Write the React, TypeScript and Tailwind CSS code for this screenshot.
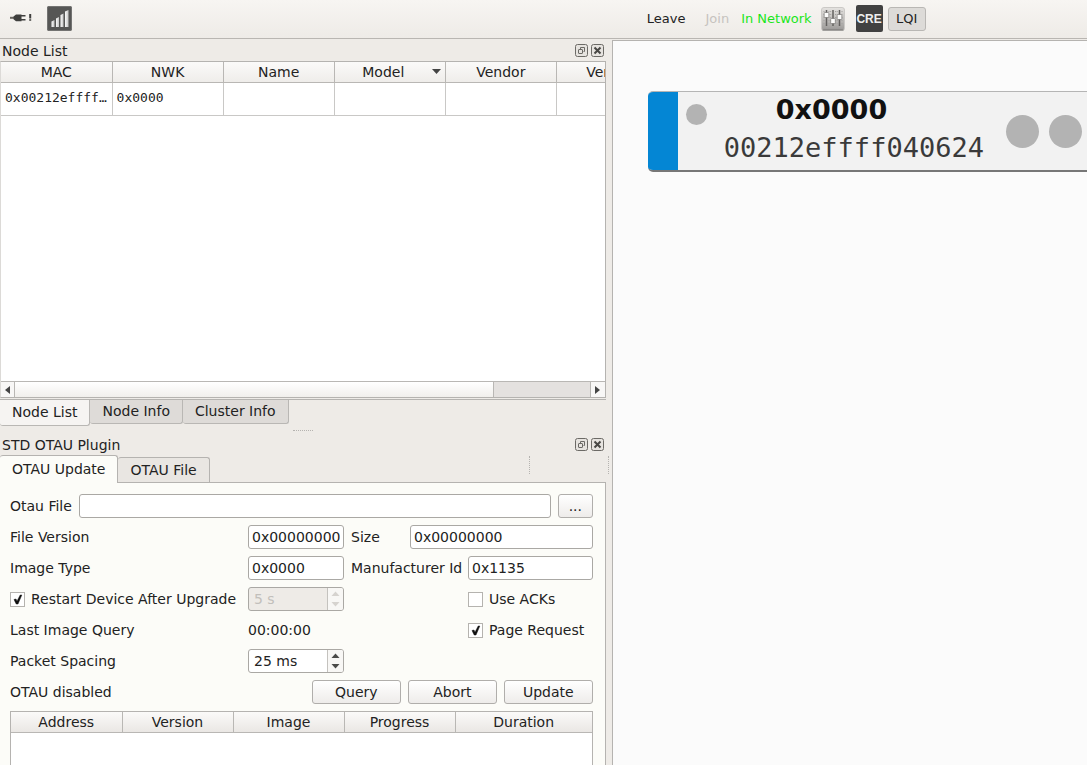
import { useState } from "react";
import clsx from "clsx";

const nodeColumns = ["MAC", "NWK", "Name", "Model", "Vendor", "Version"];
const otauColumns = ["Address", "Version", "Image", "Progress", "Duration"];

const field =
  "h-6 min-w-0 rounded-[3px] border border-[#aaa8a4] bg-white px-[3px] text-[#222]";
const pushButton =
  "h-6 rounded-[3px] border border-[#b0aeab] bg-linear-to-b from-white to-[#eeecea]";

function PlugIcon() {
  return (
    <svg width="24" height="12" viewBox="0 0 24 12" fill="#3f3f3d">
      <path d="M0 4.8h5v2H0z" fill="#66645f" />
      <path d="M3.5 4.4 6 2.6h5.5v6.6H6L3.5 7.2z" />
      <path d="M11 3h4.5v1.6H11zM11 7h4.5v1.6H11z" />
      <path d="M19.2 2h2v4.6h-2zM19.2 7.2h2v1.6h-2z" />
    </svg>
  );
}

function SignalIcon() {
  return (
    <svg width="25" height="25" viewBox="0 0 25 25">
      <defs>
        <linearGradient id="bar" x1="0" y1="0" x2="1" y2="0">
          <stop offset="0" stopColor="#fafafa" />
          <stop offset="1" stopColor="#c6c6c5" />
        </linearGradient>
      </defs>
      <rect width="25" height="25" rx="2" fill="#565655" />
      <rect x="0.5" y="0.5" width="24" height="24" rx="1.5" fill="none" stroke="#737372" />
      <g fill="url(#bar)">
        <path d="M4.5 15.5 7.5 14v7h-3z" />
        <path d="M9 12.5 12 11v10H9z" />
        <path d="M13.5 9l3-1.5V21h-3z" />
        <path d="M18 5.5 21.5 4v17H18z" />
      </g>
    </svg>
  );
}

function SlidersIcon() {
  return (
    <svg width="24" height="24" viewBox="0 0 24 24">
      <defs>
        <linearGradient id="mixer" x1="0" y1="0" x2="0" y2="1">
          <stop offset="0" stopColor="#e6e4e1" />
          <stop offset="1" stopColor="#9a9896" />
        </linearGradient>
      </defs>
      <rect x="0.5" y="0.5" width="23" height="23" rx="2.5" fill="url(#mixer)" stroke="#cbc9c6" />
      <path d="M1.5 23h21" stroke="#777573" />
      <path d="M5.5 3v16M12 3v16M18.5 3v16" stroke="#63615f" strokeWidth="1.5" />
      <path
        d="M3 4v14M8 4v14M9.7 4v14M14.5 4v14M16.2 4v14M21 4v14"
        stroke="#a3a19f"
        strokeDasharray="1 2"
      />
      <g fill="#fcfcfb" stroke="#6b6967" strokeWidth="0.6">
        <rect x="3.2" y="5.5" width="4.6" height="5" rx="0.7" />
        <rect x="9.7" y="11.5" width="4.6" height="5" rx="0.7" />
        <rect x="16.2" y="7.5" width="4.6" height="5" rx="0.7" />
      </g>
    </svg>
  );
}

function FloatIcon() {
  return (
    <svg width="13" height="13" viewBox="0 0 13 13" fill="none" stroke="#6c6a66">
      <rect x="0.5" y="0.5" width="12" height="12" rx="2" fill="#e6e3df" />
      <path d="M5.5 5V3.5h4v4H8.5" />
      <rect x="3.5" y="5.5" width="4" height="4" rx="0.5" />
    </svg>
  );
}

function CloseIcon() {
  return (
    <svg width="13" height="13" viewBox="0 0 13 13" fill="none" stroke="#6c6a66">
      <rect x="0.5" y="0.5" width="12" height="12" rx="2" fill="#e6e3df" />
      <path d="m3.5 3.5 6 6m0-6-6 6" stroke="#484744" strokeWidth="2" />
    </svg>
  );
}

function DockTitle({ title }: { title: string }) {
  return (
    <div className="flex h-[21px] shrink-0 items-center gap-[3px] pr-[2px] pl-[2px]">
      <h2 className="mr-auto">{title}</h2>
      <button aria-label={`Float ${title}`}>
        <FloatIcon />
      </button>
      <button aria-label={`Close ${title}`}>
        <CloseIcon />
      </button>
    </div>
  );
}

function CheckBox({ label, checked }: { label: string; checked?: boolean }) {
  return (
    <label className="flex items-center gap-[6px] whitespace-nowrap">
      <span className="grid">
        <input
          type="checkbox"
          defaultChecked={checked}
          className="peer col-start-1 row-start-1 size-[15px] appearance-none border border-[#b5b3af] bg-white"
        />
        <svg
          viewBox="0 0 15 15"
          className="pointer-events-none invisible col-start-1 row-start-1 size-[15px] peer-checked:visible"
        >
          <path d="M4 7.5 6 7l1 2.2L10.2 3h1.6L8 12H6.2z" fill="#111" stroke="#111" strokeWidth="0.5" />
        </svg>
      </span>
      {label}
    </label>
  );
}

type SpinBoxProps = { id: string; label: string; value: string; disabled?: boolean };

function SpinBox({ id, label, value, disabled }: SpinBoxProps) {
  const arrow = disabled ? "#d6d3cf" : "#4a4a48";
  return (
    <div
      className={clsx(
        "flex h-6 overflow-hidden rounded-[3px] border border-[#aaa8a4]",
        disabled ? "bg-[#eeebe7] text-[#c2bfbb]" : "bg-white text-[#222]"
      )}
    >
      <input
        id={id}
        aria-label={label}
        defaultValue={value}
        disabled={disabled}
        className="w-0 min-w-0 flex-1 px-[5px]"
      />
      <div className="flex w-4 flex-col border-l border-[#c4c2be] bg-[#f8f7f5]">
        <button type="button" aria-label={`Increase ${label}`} disabled={disabled} className="flex flex-1 items-center justify-center">
          <svg width="9" height="5" viewBox="0 0 9 5">
            <path d="M4.5 0.5 8.5 5h-8z" fill={arrow} />
          </svg>
        </button>
        <button type="button" aria-label={`Decrease ${label}`} disabled={disabled} className="flex flex-1 items-center justify-center">
          <svg width="9" height="5" viewBox="0 0 9 5">
            <path d="M4.5 4.5 8.5 0h-8z" fill={arrow} />
          </svg>
        </button>
      </div>
    </div>
  );
}

function Toolbar() {
  return (
    <header className="grid h-[39px] shrink-0 grid-cols-[51fr_6px_40fr] border-b border-[#b9b6b2] bg-linear-to-b from-[#f7f5f2] to-[#eeebe7] text-[13px]">
      <div className="flex items-center gap-[13px] pb-[2px] pl-[10px]">
        <button aria-label="Connect">
          <PlugIcon />
        </button>
        <button aria-label="Signal">
          <SignalIcon />
        </button>
      </div>
      <div />
      <div className="flex items-center pb-px pl-[35px] whitespace-nowrap">
        <button>Leave</button>
        <button disabled className="ml-5 text-[#c6c3bf]">
          Join
        </button>
        <span className="ml-3 text-[#1be61b]">In Network</span>
        <button aria-label="Settings" className="ml-[9px]">
          <SlidersIcon />
        </button>
        <button className="ml-[11px] flex h-[27px] w-[27px] items-center justify-center rounded-[2px] bg-[#414141] font-['Liberation_Sans',sans-serif] text-[12px] font-bold text-[#eee]">
          CRE
        </button>
        <button className="ml-[5px] h-6 w-[38px] rounded-[3px] border border-[#b9b7b4] bg-[#dddbd8]">
          LQI
        </button>
      </div>
    </header>
  );
}

function NodeTable() {
  return (
    <div className="flex min-h-0 flex-1 flex-col border border-l-[#dcdad7] border-[#b5b3b0] bg-white">
      <div className="min-h-0 flex-1 overflow-hidden">
        <table className="w-[667px] table-fixed border-collapse">
          <thead>
            <tr className="h-5 bg-linear-to-b from-[#fbfaf9] to-[#efedea]">
              {nodeColumns.map((name) => (
                <th key={name} className="border-r border-b border-[#b9b7b4] p-0 font-normal">
                  {name === "Model" ? (
                    <span className="flex items-center pr-1">
                      <span className="flex-1">{name}</span>
                      <svg width="9" height="5" viewBox="0 0 9 5">
                        <path d="M0 0h9L4.5 5z" fill="#444" />
                      </svg>
                    </span>
                  ) : (
                    name
                  )}
                </th>
              ))}
            </tr>
          </thead>
          <tbody>
            <tr className="h-[33px] font-['DejaVu_Sans_Mono',monospace] text-[13px]">
              <td className="truncate border-r border-b border-[#c9c8c6] px-1 pb-[2px]">0x00212effff040624</td>
              <td className="border-r border-b border-[#c9c8c6] px-1 pb-[2px]">0x0000</td>
              <td className="border-r border-b border-[#c9c8c6]" />
              <td className="border-r border-b border-[#c9c8c6]" />
              <td className="border-r border-b border-[#c9c8c6]" />
              <td className="border-r border-b border-[#c9c8c6]" />
            </tr>
          </tbody>
        </table>
      </div>
      <div className="flex h-4 shrink-0 border-t border-[#b9b7b4] bg-[#e4e1df]">
        <button aria-label="Scroll left" className="flex w-[14px] items-center justify-center border-r border-[#b9b7b4] bg-[#f8f7f6]">
          <svg width="5" height="8" viewBox="0 0 5 8">
            <path d="M5 0v8L0 4z" fill="#444" />
          </svg>
        </button>
        <div className="flex-1">
          <div className="h-full w-5/6 border-r border-[#b9b7b4] bg-linear-to-b from-white to-[#f1efec]" />
        </div>
        <button aria-label="Scroll right" className="flex w-[15px] items-center justify-center border-l border-[#b9b7b4] bg-[#f8f7f6]">
          <svg width="5" height="8" viewBox="0 0 5 8">
            <path d="M0 0v8l5-4z" fill="#444" />
          </svg>
        </button>
      </div>
    </div>
  );
}

function NodeDock() {
  const tabs = ["Node List", "Node Info", "Cluster Info"];
  const [active, setActive] = useState("Node List");

  return (
    <section className="flex min-h-0 flex-1 flex-col">
      <DockTitle title="Node List" />
      <NodeTable />
      <div className="mt-px flex h-[27px] shrink-0 items-start border-t border-[#b5b3b0]">
        {tabs.map((tab) => (
          <button
            key={tab}
            onClick={() => setActive(tab)}
            className={clsx(
              "rounded-b-[3px] border-r border-b border-[#b9b7b4] pb-[2px] pl-3",
              tab === active ? "h-[26px] bg-[#f6f4f2] pr-3" : "h-6 bg-[#dedbd8] pr-3"
            )}
          >
            {tab}
          </button>
        ))}
      </div>
    </section>
  );
}

function OtauForm() {
  return (
    <form className="flex flex-col gap-[7px] whitespace-nowrap">
      <div className="flex items-center gap-[7px]">
        <label htmlFor="otau-file">Otau File</label>
        <input id="otau-file" className={clsx(field, "flex-1")} />
        <button type="button" aria-label="Browse" className={clsx(pushButton, "w-[35px]")}>
          ...
        </button>
      </div>
      <div className="grid grid-cols-[231px_96px_minmax(0,1fr)] items-center gap-[7px]">
        <label htmlFor="file-version">File Version</label>
        <input id="file-version" defaultValue="0x00000000" className={field} />
        <div className="flex items-center gap-[7px]">
          <label htmlFor="size" className="w-[52px] shrink-0">
            Size
          </label>
          <input id="size" defaultValue="0x00000000" className={clsx(field, "flex-1")} />
        </div>

        <label htmlFor="image-type">Image Type</label>
        <input id="image-type" defaultValue="0x0000" className={field} />
        <div className="flex items-center gap-[7px]">
          <label htmlFor="manufacturer" className="w-[110px] shrink-0">
            Manufacturer Id
          </label>
          <input id="manufacturer" defaultValue="0x1135" className={clsx(field, "flex-1")} />
        </div>

        <CheckBox label="Restart Device After Upgrade" checked />
        <SpinBox id="restart-delay" label="Restart delay" value="5 s" disabled />
        <div className="pl-[117px]">
          <CheckBox label="Use ACKs" />
        </div>

        <span className="h-6 leading-6">Last Image Query</span>
        <span>00:00:00</span>
        <div className="pl-[117px]">
          <CheckBox label="Page Request" checked />
        </div>

        <label htmlFor="packet-spacing">Packet Spacing</label>
        <SpinBox id="packet-spacing" label="Packet Spacing" value="25 ms" />
      </div>
      <div className="flex items-center gap-[7px]">
        <span className="mr-auto">OTAU disabled</span>
        {["Query", "Abort", "Update"].map((name) => (
          <button key={name} type="button" className={clsx(pushButton, "w-[89px]")}>
            {name}
          </button>
        ))}
      </div>
    </form>
  );
}

function OtauDock() {
  const tabs = ["OTAU Update", "OTAU File"];
  const [active, setActive] = useState("OTAU Update");

  return (
    <section className="flex shrink-0 flex-col">
      <DockTitle title="STD OTAU Plugin" />
      <div className="flex h-[27px] items-end">
        {tabs.map((tab) => (
          <button
            key={tab}
            onClick={() => setActive(tab)}
            className={clsx(
              "rounded-t-[3px] border-t border-r border-[#b5b3b0] px-3",
              tab === active ? "z-10 -mb-px h-7 bg-[#fcfcf8] pb-[2px]" : "h-[25px] bg-[#e9e6e2]"
            )}
          >
            {tab}
          </button>
        ))}
        <div className="mr-[76px] mb-2 ml-auto h-[18px] border-l border-dotted border-[#b5b3b0]" />
      </div>
      <div className="border-t border-r border-[#b5b3b0] bg-[#fcfcf8] pt-[11px] pr-3 pl-[10px]">
        <OtauForm />
        <div className="mt-[7px] h-[54px] border border-b-0 border-[#b5b3b0] bg-white">
          <table className="w-full table-fixed border-collapse">
            <thead>
              <tr className="h-5 bg-linear-to-b from-[#fbfaf9] to-[#eae7e4]">
                {otauColumns.map((name) => (
                  <th
                    key={name}
                    className="w-[111px] border-r border-b border-[#b9b7b4] p-0 font-normal last:w-auto last:border-r-0"
                  >
                    {name}
                  </th>
                ))}
              </tr>
            </thead>
          </table>
        </div>
      </div>
    </section>
  );
}

function NodeCard() {
  return (
    <div className="mt-[50px] ml-[35px] flex h-[81px] w-[480px] overflow-hidden rounded-[5px] border-t border-b-2 border-t-[#b5b5b5] border-b-[#777] bg-[#f2f2f2]">
      <div className="w-[30px] shrink-0 bg-[#0486d4]" />
      <div className="mt-3 ml-2 size-[21px] shrink-0 rounded-full bg-[#b3b3b3]" />
      <div className="ml-[17px] shrink-0 text-[27px] leading-[38px]">
        <div className="-mt-px pl-[52px] font-bold text-[#111]">0x0000</div>
        <div className="font-['DejaVu_Sans_Mono',monospace] text-[#3a3a3a]">00212effff040624</div>
      </div>
      <div className="ml-[22px] flex shrink-0 items-center gap-[10px]">
        <div className="size-[33px] rounded-full bg-[#b3b3b3]" />
        <div className="size-[33px] rounded-full bg-[#b3b3b3]" />
      </div>
    </div>
  );
}

export default function App() {
  return (
    <div className="flex h-screen flex-col overflow-hidden bg-[#eeebe7] font-['DejaVu_Sans',sans-serif] text-[14px] leading-[18px] text-[#222]">
      <Toolbar />
      <main className="grid min-h-0 flex-1 grid-cols-[51fr_6px_40fr]">
        <div className="flex min-h-0 min-w-0 flex-col pt-px">
          <NodeDock />
          <div className="flex h-2 shrink-0 items-center justify-center">
            <div className="w-5 border-t border-dotted border-[#b5b3b0]" />
          </div>
          <OtauDock />
        </div>
        <div className="flex flex-col items-center justify-center pt-[126px]">
          <div className="h-[18px] border-l border-dotted border-[#b5b3b0]" />
        </div>
        <div className="mt-px min-w-0 overflow-hidden border-t border-l border-[#b5b3b0] bg-[#fbfbfb]">
          <NodeCard />
        </div>
      </main>
    </div>
  );
}
